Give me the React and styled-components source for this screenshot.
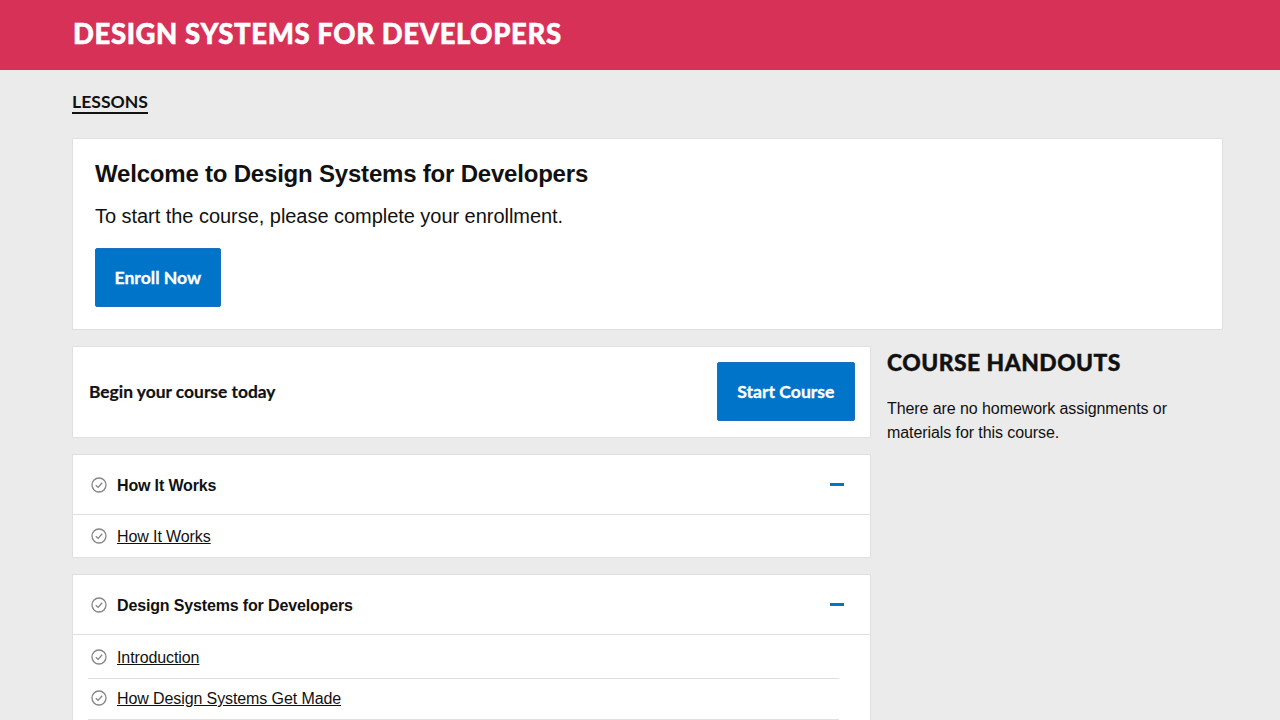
import styled, { createGlobalStyle } from "styled-components";

const GlobalStyle = createGlobalStyle`
  html, body {
    margin: 0;
    height: 720px;
    overflow: hidden;
    background: #ebebeb;
    color: #111;
    font-family: "Liberation Sans", Arial, sans-serif;
  }
`;

const Header = styled.header`
  height: 70px;
  box-sizing: border-box;
  background: #d83158;
  padding: 0 73px 3px;
  display: flex;
  align-items: center;
`;

const Title = styled.h1`
  margin: 0;
  color: #fff;
  font-family: Lato, sans-serif;
  font-weight: 900;
  font-size: 27.5px;
  letter-spacing: 0.6px;
  -webkit-text-stroke: 0.5px #fff;
  text-transform: uppercase;
`;

const Main = styled.main`
  padding: 0 57px 0 72px;
`;

const Tabs = styled.nav`
  display: flex;
  padding: 22px 0 24px;
`;

const Tab = styled.a`
  font-family: Lato, sans-serif;
  font-weight: 700;
  font-size: 17.6px;
  line-height: 20px;
  color: #111;
  text-transform: uppercase;
  border-bottom: 2px solid #111;
`;

const Card = styled.section`
  background: #fff;
  border: 1px solid #e0e0e0;
`;

const WelcomeCard = styled(Card)`
  padding: 21px 22px 22px;
  margin-bottom: 16px;
`;

const WelcomeTitle = styled.h2`
  margin: 0 0 14px;
  font-size: 24px;
  line-height: 28px;
  font-weight: 700;
  letter-spacing: -0.2px;
`;

const WelcomeText = styled.p`
  margin: 0 0 18px;
  font-size: 20px;
  line-height: 28px;
  letter-spacing: -0.04px;
`;

const Button = styled.a`
  display: inline-flex;
  align-items: center;
  justify-content: center;
  box-sizing: border-box;
  height: 59px;
  padding: 0 ${(p) => p.$pad}px;
  background: #0074c9;
  border: 1px solid #1a6fc0;
  border-radius: 2px;
  color: #fff;
  font-family: Lato, sans-serif;
  font-weight: 700;
  font-size: 17.6px;
  -webkit-text-stroke: 0.3px #fff;
`;

const Columns = styled.div`
  display: grid;
  grid-template-columns: 799px 1fr;
  column-gap: 16px;
`;

const Left = styled.div`
  display: flex;
  flex-direction: column;
  gap: 16px;
`;

const BeginCard = styled(Card)`
  display: flex;
  align-items: center;
  justify-content: space-between;
  padding: 15px 15px 16px 16px;
`;

const BeginText = styled.span`
  font-family: Lato, sans-serif;
  font-weight: 700;
  font-size: 17.4px;
  -webkit-text-stroke: 0.2px #111;
`;

const SectionHead = styled.div`
  height: 59px;
  display: flex;
  align-items: center;
  gap: 10px;
  padding: 0 26px 0 18px;
  border-bottom: 1px solid #e0e0e0;
`;

const SectionName = styled.strong`
  flex: 1;
  padding-top: 2px;
  font-size: 16px;
  font-weight: 700;
  letter-spacing: -0.15px;
`;

const Minus = styled.span`
  width: 14px;
  height: 2.5px;
  background: #0074c9;
`;

const LessonList = styled.ul`
  list-style: none;
  margin: 0;
  padding: ${(p) => (p.$more ? 3 : 2)}px 31px ${(p) => (p.$more ? 40 : 0)}px 15px;
`;

const Lesson = styled.li`
  height: 40px;
  display: flex;
  align-items: center;
  gap: 10px;
  padding-left: 3px;
  border-bottom: ${(p) => (p.$single ? "none" : "1px solid #e0e0e0")};
  svg {
    margin-bottom: 2px;
  }
`;

const LessonLink = styled.a`
  font-size: 16px;
  letter-spacing: -0.1px;
  color: #111;
  text-decoration: underline;
`;

const Aside = styled.aside``;

const AsideTitle = styled.h3`
  margin: 2px 0 21px;
  font-family: Lato, sans-serif;
  font-weight: 900;
  font-size: 22.8px;
  line-height: 28px;
  letter-spacing: 0.5px;
  -webkit-text-stroke: 0.4px #111;
  text-transform: uppercase;
`;

const AsideText = styled.p`
  margin: 0;
  font-size: 16px;
  line-height: 23.5px;
  letter-spacing: -0.08px;
  max-width: 300px;
`;

const Check = () => (
  <svg width="16" height="16" viewBox="0 0 16 16" fill="none" stroke="#858585" strokeWidth="1.3">
    <circle cx="8" cy="8" r="7" />
    <path d="M4.8 8.2 7.1 10.4 11.2 5.8" strokeWidth="1.3" />
  </svg>
);

const Section = ({ name, lessons, more }) => (
  <Card>
    <SectionHead>
      <Check />
      <SectionName>{name}</SectionName>
      <Minus />
    </SectionHead>
    <LessonList $more={more}>
      {lessons.map((l) => (
        <Lesson key={l} $single={lessons.length === 1}>
          <Check />
          <LessonLink>{l}</LessonLink>
        </Lesson>
      ))}
    </LessonList>
  </Card>
);

export default function App() {
  return (
    <>
      <GlobalStyle />
      <Header>
        <Title>Design Systems for Developers</Title>
      </Header>
      <Main>
        <Tabs>
          <Tab>Lessons</Tab>
        </Tabs>
        <WelcomeCard>
          <WelcomeTitle>Welcome to Design Systems for Developers</WelcomeTitle>
          <WelcomeText>To start the course, please complete your enrollment.</WelcomeText>
          <Button $pad={18.5}>Enroll Now</Button>
        </WelcomeCard>
        <Columns>
          <Left>
            <BeginCard>
              <BeginText>Begin your course today</BeginText>
              <Button $pad={19.5}>Start Course</Button>
            </BeginCard>
            <Section name="How It Works" lessons={["How It Works"]} />
            <Section
              name="Design Systems for Developers"
              lessons={["Introduction", "How Design Systems Get Made"]}
              more
            />
          </Left>
          <Aside>
            <AsideTitle>Course Handouts</AsideTitle>
            <AsideText>There are no homework assignments or materials for this course.</AsideText>
          </Aside>
        </Columns>
      </Main>
    </>
  );
}
